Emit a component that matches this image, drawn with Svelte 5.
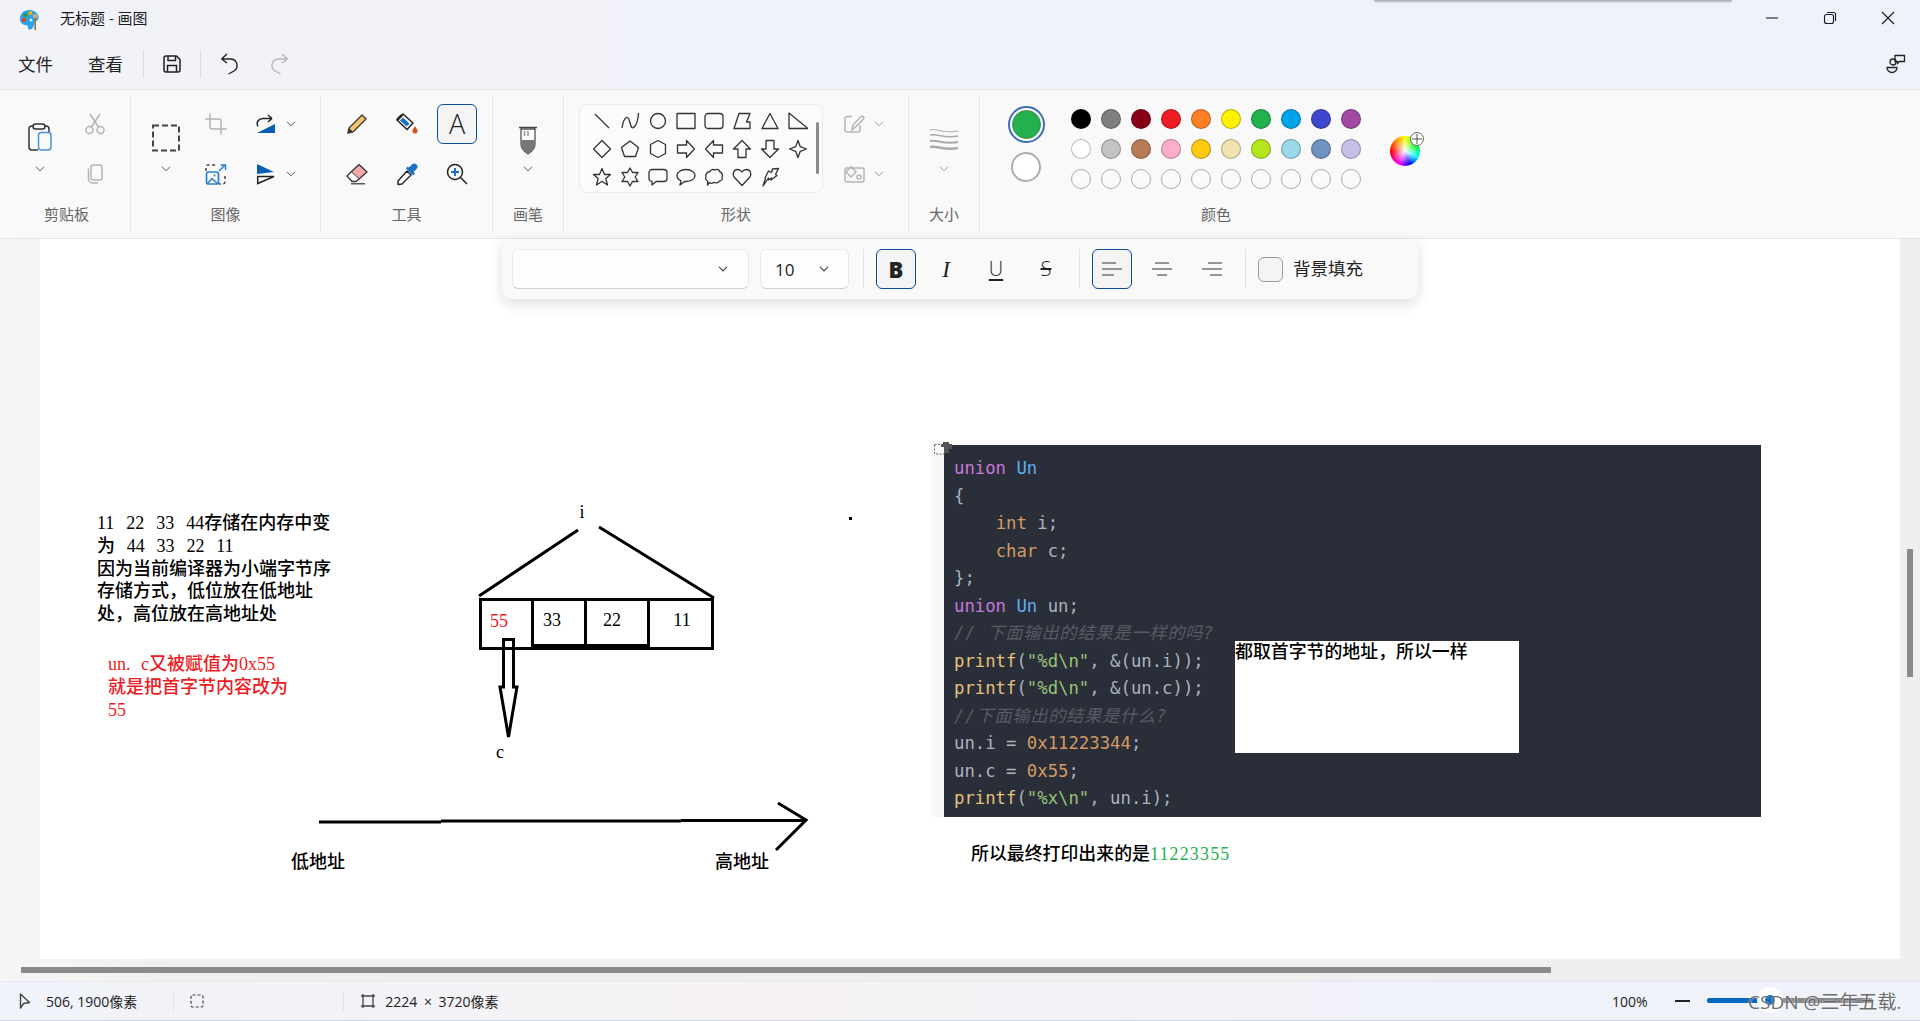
<script>
  const row1 = ['#000000','#7f7f7f','#880015','#ed1c24','#ff7f27','#fff200','#22b14c','#00a2e8','#3f48cc','#a349a4'];
  const row2 = ['#ffffff','#c3c3c3','#b97a57','#ffaec9','#ffc90e','#efe4b0','#b5e61d','#99d9ea','#7092be','#c8bfe7'];
  const row3 = Array(10).fill('');
  const shapes = [
    'M3 3L17 17',
    'M2 17C4 5 8 4 9.5 10S12 19 15 15 18 7 18.5 2',
    'M17.5 10a7.5 7.5 0 1 1-15 0a7.5 7.5 0 1 1 15 0Z',
    'M1 2.5H19V17.5H1Z',
    'M4 2.5H16a3 3 0 0 1 3 3V14.5a3 3 0 0 1-3 3H4a3 3 0 0 1-3-3V5.500a3 3 0 0 1 3-3Z',
    'M2 17.500L7 2.500H18L14.500 11H18V17.500Z',
    'M10 2.500L18 17.500H2Z',
    'M1 2V17.500H20Z',
    'M10 1.500L18.500 10L10 18.500L1.500 10Z',
    'M10 2L18.500 8.500L15.500 17.500H4.500L1.500 8.500Z',
    'M10 1.500L17.500 5.500V14.500L10 18.500L2.500 14.500V5.500Z',
    'M1.500 6H10.500V1.500L18.500 10L10.500 18.500V14H1.500Z',
    'M18.500 6H9.500V1.500L1.500 10L9.500 18.500V14H18.500Z',
    'M10 1.500L18.500 10H14V18.500H6V10H1.500Z',
    'M10 18.500L18.500 10H14V1.500H6V10H1.500Z',
    'M10 1.500L12.300 7.700L18.500 10L12.300 12.300L10 18.500L7.700 12.300L1.500 10L7.700 7.700Z',
    'M10 1.500L12.500 7.500H18.500L13.800 11.500L15.500 18L10 14.300L4.500 18L6.200 11.500L1.500 7.500H7.500Z',
    'M10 1L12.500 5.500H18L15.200 10L18 14.500H12.500L10 19L7.500 14.500H2L4.800 10L2 5.500H7.500Z',
    'M4 2.500H16a3 3 0 0 1 3 3V11.500a3 3 0 0 1-3 3H8L4 18V14.500a3 3 0 0 1-3-3V5.500a3 3 0 0 1 3-3Z',
    'M10 2.500C15 2.500 19 5 19 8.500S15 14.500 10 14.500H8.500L4 18L5 13.800C2.500 12.800 1 10.800 1 8.500C1 5 5 2.500 10 2.500Z',
    'M6 4.500C7 2.500 9.500 2 11 3C13 1.800 15.500 2.800 16 5C18 5.500 19 8 18 9.500C19 11.500 17.500 14 15.500 14C14.500 16 11.500 16.500 10 15.300C8.500 16.500 6.500 16.500 5.500 15.500L3.500 18L3.700 14C2 13.500 1 11 2 9.500C1 7.500 3.500 4.500 6 4.500Z',
    'M10 18.500L2.500 10.500C0 7.500 1.500 2.500 5.500 2.500C7.500 2.500 9 3.500 10 5C11 3.500 12.500 2.500 14.500 2.500C18.500 2.500 20 7.500 17.500 10.500Z',
    'M5 11L8.500 4L11.500 5.500L12.500 2L18.500 1.500L15.500 7.500L17 8.500L11 13L11.500 11L8.500 13L8.500 11L3 19L5.500 11.500Z'
  ];
  const code = [
    [['kw','union'],['','\u0020'],['ty','Un']],
    [['pl','{']],
    [['','    '],['nm','int'],['pl',' i;']],
    [['','    '],['nm','char'],['pl',' c;']],
    [['pl','};']],
    [['kw','union'],['','\u0020'],['ty','Un'],['pl',' un;']],
    [['cm','// 下面输出的结果是一样的吗?']],
    [['fn','printf'],['pl','('],['st','"%d\\n"'],['pl',', &(un.i));']],
    [['fn','printf'],['pl','('],['st','"%d\\n"'],['pl',', &(un.c));']],
    [['cm','//下面输出的结果是什么?']],
    [['pl','un.i = '],['nm','0x11223344'],['pl',';']],
    [['pl','un.c = '],['nm','0x55'],['pl',';']],
    [['fn','printf'],['pl','('],['st','"%x\\n"'],['pl',', un.i);']]
  ];
</script>

{#snippet chev(muted = false)}
  <svg class="chev" class:muted width="10" height="6" viewBox="0 0 10 6"><path d="M1 .8L5 4.800L9 .8"/></svg>
{/snippet}

{#snippet lines(a, b, c)}
  <svg width="22" height="18" viewBox="0 0 22 18" class="lines">
    <path d={`M${a} 3H${a + 14}M1 9H21M${b} 15H${b + c}`}/>
  </svg>
{/snippet}

<div class="app">
  <header class="title">
    <svg class="logo" width="24" height="24" viewBox="0 0 24 24">
      <path fill="#27a3ea" d="M11 2C5.500 2 2 6 2 11c0 4 3 6 6 6 1.500 0 2 1 2 2.500 0 1.500 1 2.500 2.500 2 2-.5 3.500-3 3.500-6 0-1 .5-2 2-2.500C20 12 21 10.500 20.500 8 19.500 4.500 15.500 2 11 2Z"/>
      <circle cx="7.500" cy="7" r="2.200" fill="#3a9a2a"/>
      <circle cx="12.500" cy="5" r="2" fill="#f5b40b"/>
      <circle cx="6" cy="12" r="2.200" fill="#d9482b"/>
      <circle cx="13" cy="12" r="1.500" fill="#eaf6fd"/>
      <rect x="16.400" y="8" width="1.600" height="14" fill="#9a6b3f"/>
      <rect x="15" y="6" width="4.500" height="4" rx="1" fill="#d8a870"/>
    </svg>
    <span class="title-text">无标题 - 画图</span>
    <div class="shadow-strip"></div>
    <div class="win">
      <button class="win-btn" aria-label="min"><svg width="14" height="14" viewBox="0 0 14 14"><path d="M1 7H13"/></svg></button>
      <button class="win-btn" aria-label="max"><svg width="14" height="14" viewBox="0 0 14 14"><rect x="1.500" y="3.500" width="9" height="9" rx="2"/><path d="M4 1.500H10.500a2 2 0 0 1 2 2V10"/></svg></button>
      <button class="win-btn" aria-label="close"><svg width="14" height="14" viewBox="0 0 14 14"><path d="M1 1L13 13M13 1L1 13"/></svg></button>
    </div>
  </header>

  <nav class="menu">
    <span class="mi first">文件</span>
    <span class="mi second">查看</span>
    <i class="msep a"></i>
    <svg class="m-save" width="18" height="18" viewBox="0 0 18 18"><path d="M3 1H13.500L17 4.500V15a2 2 0 0 1-2 2H3a2 2 0 0 1-2-2V3a2 2 0 0 1 2-2Z"/><path d="M5 1V5.500H12.500V1M4.500 17V10.500H13.500V17"/></svg>
    <i class="msep b"></i>
    <svg class="m-undo" width="20" height="22" viewBox="0 0 20 22"><path d="M1.500 6L7 1M1.500 6L7 10M1.500 6H11a6.500 6.500 0 0 1 3 12L8.500 21"/></svg>
    <svg class="m-redo" width="20" height="22" viewBox="0 0 20 22"><path d="M18.500 6L13 1M18.500 6L13 10M18.500 6H9a6.500 6.500 0 0 0-3 12L11.500 21"/></svg>
    <svg class="m-person" width="20" height="20" viewBox="0 0 20 20"><circle cx="7" cy="8" r="3"/><path d="M1 13.500H11a0 0 0 0 1 0 0a5 5 0 0 1-5 5a5 5 0 0 1-5-5Z"/><path d="M9 1.500H18.500V7.500H13.500L11.500 9.500V7.500H9Z"/></svg>
  </nav>

  <section class="ribbon">
    <div class="group g-clip">
      <div class="body cols-clip">
        <div class="big">
          <svg class="bigicon" width="26" height="30" viewBox="0 0 26 30">
            <path class="dk" d="M11 27H5a3 3 0 0 1-3-3V6a3 3 0 0 1 3-3h1M18 3h1a3 3 0 0 1 3 3v3"/>
            <rect class="dk" x="6" y="1" width="12" height="5" rx="2.500"/>
            <rect x="11.500" y="9.500" width="12.500" height="17.500" rx="3" fill="#f9f9f9" stroke="#4a90d9" stroke-width="1.500"/>
          </svg>
          {@render chev()}
        </div>
        <div class="stack">
          <div class="cell"><svg width="20" height="24" viewBox="0 0 20 24" class="off"><circle cx="4.500" cy="18" r="3.500"/><circle cx="15.500" cy="18" r="3.500"/><path d="M6.500 15L15 2M13.500 15L5 2"/></svg></div>
          <div class="cell"><svg width="20" height="22" viewBox="0 0 20 22" class="off"><rect x="6" y="2" width="11" height="15" rx="2"/><path d="M3.500 5.500V16a4 4 0 0 0 4 4H13"/></svg></div>
        </div>
      </div>
      <div class="label lbl-clip">剪贴板</div>
    </div>

    <div class="group g-image">
      <div class="body cols-image">
        <div class="big">
          <svg class="bigicon" width="30" height="28" viewBox="0 0 30 28"><rect x="2" y="1.500" width="26" height="25" fill="none" stroke="#444" stroke-width="2" stroke-dasharray="6 3"/></svg>
          {@render chev()}
        </div>
        <div class="stack">
          <div class="cell"><svg width="24" height="24" viewBox="0 0 24 24" class="off"><path d="M6 1.500V15a2 2 0 0 0 2 2H23M1 7H15a2 2 0 0 1 2 2V22.500"/></svg></div>
          <div class="cell"><svg width="22" height="22" viewBox="0 0 22 22"><path fill="none" stroke="#444" stroke-width="1.500" stroke-dasharray="3 2.500" d="M1 8V4a2 2 0 0 1 2-2H11M20 13V19a2 2 0 0 1-2 2H14"/><rect x="1.500" y="9" width="12" height="12" rx="2" fill="#f9f9f9" stroke="#2a7fd0" stroke-width="1.700"/><circle cx="9.500" cy="12.500" r="1" fill="#2a7fd0"/><path d="M3 20L7 15.500L12 20" fill="none" stroke="#2a7fd0" stroke-width="1.500"/><path d="M14 8L20 2M15.500 2H20.500V7" fill="none" stroke="#2a7fd0" stroke-width="1.500"/></svg></div>
        </div>
        <div class="stack">
          <div class="cell left">
            <svg width="24" height="24" viewBox="0 0 24 24"><path d="M3 21L21 12V21Z" fill="#0a5fb4"/><path d="M4 14.500C1.500 10 5 6.500 9 6.500H18M18 6.500L14 3M18 6.500L14 10" fill="none" stroke="#222" stroke-width="1.500"/></svg>
            {@render chev()}
          </div>
          <div class="cell left">
            <svg width="24" height="24" viewBox="0 0 24 24"><path d="M3 2L20 10L3 12Z" fill="#0a5fb4"/><path d="M3.700 14.500H20L3.700 21.500Z" fill="none" stroke="#222" stroke-width="1.500"/></svg>
            {@render chev()}
          </div>
        </div>
      </div>
      <div class="label">图像</div>
    </div>

    <div class="group g-tools">
      <div class="body cols-tools">
        <div class="cell"><svg width="24" height="24" viewBox="0 0 24 24"><path d="M17 3L21 7L8 20L2.800 21.200L4 16Z" fill="#f3c56f" stroke="#333" stroke-width="1.200" stroke-linejoin="round"/><path d="M2.800 21.200L4 16L8 20Z" fill="#333"/></svg></div>
        <div class="cell"><svg width="24" height="24" viewBox="0 0 24 24"><path d="M8 2L18 11L12 17.500L2 8Z" fill="#fff" stroke="#222" stroke-width="1.500" stroke-linejoin="round"/><path d="M8 5.500L14.500 11.500L11.500 14.500L5 8.500Z" fill="#1a72c9"/><path d="M2 8L7 3" stroke="#222" stroke-width="2.500"/><path d="M20 14C21 16 22.500 17.500 22.500 19a2.500 2.500 0 0 1-5 0c0-1.500 1.500-3 2.500-5Z" fill="#d4501c"/></svg></div>
        <div class="cell"><button class="tool-on">A</button></div>
        <div class="cell"><svg width="24" height="24" viewBox="0 0 24 24"><path d="M14 2.500L22 10L14 17L6 10Z" fill="#f4a9a9" stroke="#333" stroke-width="1.300" stroke-linejoin="round"/><path d="M6 10L2 14L7 19.500H11L14 17" fill="#fff" stroke="#333" stroke-width="1.300" stroke-linejoin="round"/><path d="M6 21.800H20" stroke="#333" stroke-width="1.200"/></svg></div>
        <div class="cell"><svg width="24" height="24" viewBox="0 0 24 24"><path d="M12 9L16 13L7 22L3 22.500L3 19Z" fill="#fff" stroke="#222" stroke-width="1.400" stroke-linejoin="round"/><path d="M11 6.500L18 13.500L20 11.500L18.500 10L21.500 7a3 3 0 0 0-4.500-4.500L14 5.500L12.500 4.500Z" fill="#1a72c9"/></svg></div>
        <div class="cell"><svg width="24" height="24" viewBox="0 0 24 24"><circle cx="10" cy="10" r="7.500" fill="none" stroke="#222" stroke-width="1.500"/><path d="M15.500 15.500L22 22" stroke="#222" stroke-width="1.600"/><path d="M6 10H14M10 6V14" stroke="#1a72c9" stroke-width="2"/></svg></div>
      </div>
      <div class="label">工具</div>
    </div>

    <div class="group g-brush">
      <div class="body center-big">
        <div class="big nudge2">
          <svg class="bigicon" width="20" height="30" viewBox="0 0 20 30"><path d="M1 2.500H19M3.500 2.500V4M16.500 2.500V4" stroke="#444" stroke-width="1.500" fill="none"/><path d="M3 4H17V19C17 23 13 27 10 29C7 27 3 23 3 19Z" fill="#fafafa" stroke="#555" stroke-width="1.300"/><path d="M3 15H17V19C17 23 13 27 10 29C7 27 3 23 3 19Z" fill="#777"/><path d="M6.500 6V11M10 6V11" stroke="#999" stroke-width="1.500"/></svg>
          {@render chev()}
        </div>
      </div>
      <div class="label">画笔</div>
    </div>

    <div class="group g-shapes">
      <div class="body shapes-row">
        <div class="shape-panel">
          <div class="shape-grid">
            {#each shapes as d}
              <svg width="20" height="20" viewBox="0 0 20 20"><path {d}/></svg>
            {/each}
          </div>
          <i class="panel-thumb"></i>
        </div>
        <div class="stack outline-col">
          <div class="cell left">
            <svg width="22" height="20" viewBox="0 0 22 20" class="off"><path d="M9 2.500H4a2 2 0 0 0-2 2V16a2 2 0 0 0 2 2H15a2 2 0 0 0 2-2V11"/><path d="M9 16L10 11L18 2.500C20 1.500 21.500 3 20.500 5L12 13.500Z"/></svg>
            {@render chev(true)}
          </div>
          <div class="cell left">
            <svg width="22" height="20" viewBox="0 0 22 20" class="off"><rect x="2" y="4" width="19" height="14" rx="2"/><path d="M3 8L8 2.500L13 8L8 13Z"/><circle cx="16" cy="13" r="2"/></svg>
            {@render chev(true)}
          </div>
        </div>
      </div>
      <div class="label">形状</div>
    </div>

    <div class="group g-size">
      <div class="body center-big">
        <div class="big nudge3">
          <svg class="bigicon" width="30" height="28" viewBox="0 0 30 28" fill="none" stroke="#aaa"><path d="M1 3C8 1 14 7 29 4" stroke-width="1"/><path d="M1 8C8 6 14 12 29 9" stroke-width="1.500"/><path d="M1 14C8 12 14 18 29 15" stroke-width="2"/><path d="M1 20C8 18 14 24 29 21" stroke-width="2.500"/></svg>
          {@render chev(true)}
        </div>
      </div>
      <div class="label">大小</div>
    </div>

    <div class="group g-colors">
      <div class="body colors-row">
        <div class="current">
          <div class="fg"><i></i></div>
          <div class="bg"></div>
        </div>
        <div class="palette">
          {#each row1 as c}<i class="sw" style="background:{c}"></i>{/each}
          {#each row2 as c}<i class="sw" style="background:{c}"></i>{/each}
          {#each row3 as _}<i class="sw empty"></i>{/each}
        </div>
        <div class="wheel">
          <span class="plus"><svg width="10" height="10" viewBox="0 0 10 10"><path d="M0 5H10M5 0V10"/></svg></span>
        </div>
      </div>
      <div class="label">颜色</div>
    </div>
  </section>

  <main class="work">
    <div class="canvas">
      <svg class="draw" width="1860" height="720" viewBox="40 239 1860 720">
        <g class="ink">
          <path d="M479 596L578 530M599 527L714 598"/>
          <rect x="480.500" y="599.500" width="232" height="49"/>
          <path d="M532.500 599V648M585.500 599V648M648.500 599V648"/>
          <path d="M532 645.500H648"/>
          <path class="arrow" d="M503.500 687V639.500H513.500V687H517L508.500 737L500 687Z"/>
          <path d="M319 822H441M441 821H681M681 820.500H806M778 803L806 820L776 850"/>
        </g>
        <rect x="849" y="517" width="3" height="3" fill="#000"/>
        <text class="t red" x="499" y="627" text-anchor="middle">55</text>
        <text class="t" x="552" y="626" text-anchor="middle">33</text>
        <text class="t" x="612" y="626" text-anchor="middle">22</text>
        <text class="t" x="682" y="626" text-anchor="middle">11</text>
        <text class="t" x="582" y="518" text-anchor="middle">i</text>
        <text class="t" x="500" y="758" text-anchor="middle">c</text>
        <text class="t" x="318" y="868" text-anchor="middle">低地址</text>
        <text class="t" x="742" y="868" text-anchor="middle">高地址</text>
      </svg>

      <div class="note black">
        <div class="tight">11   22   33   44存储在内存中变</div>
        <div class="wide">为  44  33  22  11</div>
        <div>因为当前编译器为小端字节序</div>
        <div>存储方式，低位放在低地址</div>
        <div>处，高位放在高地址处</div>
      </div>
      <div class="note redtext">
        <div class="unc">un. c又被赋值为0x55</div>
        <div>就是把首字节内容改为</div>
        <div>55</div>
      </div>

      <div class="shot">
        <svg class="shot-mark" width="18" height="14" viewBox="0 0 18 14"><rect x=".5" y="3.500" width="11" height="9.500" fill="none" stroke="#666" stroke-dasharray="2 1.500"/><path d="M9 1H15V3H18V8H15V12H10V6H7V3H9Z" fill="#555"/></svg>
        <div class="code">
          {#each code as line}
            <div class="cl">{#each line as [k, t]}<span class={k}>{t}</span>{/each}</div>
          {/each}
        </div>
      </div>

      <div class="whitebox">都取首字节的地址，所以一样</div>
      <div class="conclusion">所以最终打印出来的是<span>11223355</span></div>
    </div>
    <i class="hbar"></i>
    <i class="vbar"></i>

    <div class="fmtbar">
      <div class="sel font">{@render chev()}</div>
      <div class="sel size"><span>10</span>{@render chev()}</div>
      <i class="fsep first"></i>
      <button class="fbtn on b">B</button>
      <button class="fbtn it">I</button>
      <button class="fbtn un">U</button>
      <button class="fbtn st"> S </button>
      <i class="fsep"></i>
      <button class="fbtn on" aria-label="left">{@render lines(1, 1, 12)}</button>
      <button class="fbtn" aria-label="center">{@render lines(4, 6, 10)}</button>
      <button class="fbtn" aria-label="right">{@render lines(7, 9, 12)}</button>
      <i class="fsep"></i>
      <i class="check"></i>
      <span class="fill-label">背景填充</span>
    </div>
  </main>

  <footer class="status">
    <svg class="st-cur" width="12" height="16" viewBox="0 0 12 16"><path d="M1.500 1V15L4.500 10.500L10.500 9.500Z" fill="none" stroke="#444" stroke-width="1.400" stroke-linejoin="round"/></svg>
    <span class="st-pos">506, 1900像素</span>
    <i class="ssep s1"></i>
    <svg class="st-sel" width="14" height="14" viewBox="0 0 14 14"><rect x="1" y="1" width="12" height="12" rx="1.500" fill="none" stroke="#444" stroke-width="1.200" stroke-dasharray="3 2"/></svg>
    <i class="ssep s2"></i>
    <svg class="st-frame" width="16" height="16" viewBox="0 0 16 16"><path d="M3 1V15M13 1V15M1 3H15M1 13H15" fill="none" stroke="#444" stroke-width="1.300"/></svg>
    <span class="st-size">2224 × 3720像素</span>
    <span class="st-zoom">100%</span>
    <i class="minus"></i>
    <div class="slider"><i class="fillbar"></i><i class="thumb"></i></div>
    <span class="mark">CSDN @三年五载.</span>
  </footer>
</div>

<style>
  :global(body) { margin: 0; background: #f0f0f0; }
  .app {
    width: 1920px; height: 1021px; display: flex; flex-direction: column; overflow: hidden;
    font-family: "Open Sans", "Noto Sans CJK SC", sans-serif; color: #222; position: relative;
  }
  i { display: block; font-style: normal; }
  button { font: inherit; color: inherit; border: 0; background: none; padding: 0; margin: 0; }
  svg { display: block; flex: none; }

  .title, .menu { background: linear-gradient(90deg, #f2f3f8, #f0f2fa 60%, #eff2fb); }
  .title { height: 44px; display: flex; align-items: center; position: relative; }
  .logo { margin-left: 18px; margin-top: -5px; }
  .title-text { margin-left: 18px; font-size: 15px; line-height: 20px; margin-top: -9px; color: #1d1d1d; }
  .shadow-strip { position: absolute; left: 1374px; width: 358px; top: 0; height: 3px; background: linear-gradient(#a8abaf, #dfe1e6); border-radius: 0 0 3px 3px; }
  .win { margin-left: auto; display: flex; padding-right: 3px; margin-top: -8px; }
  .win-btn { width: 58px; height: 30px; display: flex; align-items: center; justify-content: center; }
  .win-btn path, .win-btn rect { fill: none; stroke: #1a1a1a; stroke-width: 1.100; }

  .menu { height: 45px; box-sizing: border-box; padding-bottom: 6px; display: flex; align-items: center; position: relative; }
  .mi { font-size: 17.500px; line-height: 24px; color: #222; }
  .mi.first { margin-left: 18px; }
  .mi.second { margin-left: 35px; }
  .msep { width: 1px; height: 28px; background: #dcdde2; }
  .msep.a { margin-left: 20px; }
  .m-save { margin-left: 19px; }
  .m-save path { fill: none; stroke: #222; stroke-width: 1.500; }
  .msep.b { margin-left: 19px; }
  .m-undo { margin-left: 19px; }
  .m-undo path { fill: none; stroke: #222; stroke-width: 1.400; }
  .m-redo { margin-left: 29px; }
  .m-redo path { fill: none; stroke: #b5b5b5; stroke-width: 1.400; }
  .m-person { margin-left: auto; margin-right: 14px; }
  .m-person path, .m-person circle { fill: none; stroke: #222; stroke-width: 1.300; }

  .ribbon {
    height: 150px; box-sizing: border-box; background: #f9f9f9;
    border-top: 1px solid #e6e6e8; border-bottom: 1px solid #e4e4e4;
    display: flex; align-items: flex-start; padding-top: 5px;
  }
  .group { height: 138px; box-sizing: border-box; border-right: 1px solid #e5e5e5; display: flex; flex-direction: column; }
  .g-clip { width: 131px; }
  .g-image { width: 190px; }
  .g-tools { width: 172px; }
  .g-brush { width: 71px; }
  .g-shapes { width: 345px; }
  .g-size { width: 71px; }
  .g-colors { width: 472px; border-right: 0; }
  .body { height: 109px; box-sizing: border-box; padding-top: 4px; display: flex; }
  .label { height: 29px; box-sizing: border-box; text-align: center; font-size: 15px; line-height: 20px; color: #666; }
  .lbl-clip { padding-left: 3px; }

  .cell { width: 50px; height: 50px; display: flex; align-items: center; justify-content: center; }
  .cell.left { width: auto; justify-content: flex-start; padding-left: 13px; gap: 8px; }
  .stack { display: flex; flex-direction: column; }
  .big { width: 50px; display: flex; flex-direction: column; align-items: center; }
  .bigicon { margin-top: 24px; height: 30px; }
  .big .chev { position: relative; top: 13px; }
  .nudge2 .bigicon { margin-top: 26px; }
  .nudge2 .chev { top: 11px; }
  .nudge3 .bigicon { margin-top: 27px; }
  .nudge3 .chev { top: 10px; }
  .chev path { fill: none; stroke: #555; stroke-width: 1; }
  .chev.muted path { stroke: #999; }
  .off path, .off rect, .off circle { fill: none; stroke: #b4b4b4; stroke-width: 1.500; }
  .dk { fill: none; stroke: #333; stroke-width: 1.500; }

  .cols-clip { padding-left: 15px; gap: 5px; }
  .cols-image { padding-left: 10px; }
  .cols-tools { padding-left: 11px; width: 161px; flex-wrap: wrap; align-content: flex-start; }
  .center-big { justify-content: center; }
  .tool-on {
    width: 40px; height: 40px; box-sizing: border-box; border: 1px solid #0a4d9c; border-radius: 6px; background: #f4f4f4;
    font-family: "Open Sans", sans-serif; font-weight: 300; font-size: 27px; line-height: 36px; color: #222;
  }

  .shapes-row { padding-top: 0; }
  .shape-panel {
    margin-left: 15px; margin-top: 9px; width: 244px; height: 89px; box-sizing: border-box; border: 1px solid #ececec; border-radius: 8px;
    position: relative; padding: 2px 0 0 12px; background: #fbfbfb;
  }
  .shape-grid { display: grid; grid-template-columns: repeat(8, 28px); grid-auto-rows: 28px; align-items: center; justify-items: start; }
  .shape-grid path { fill: none; stroke: #333; stroke-width: 1.300; stroke-linejoin: round; }
  .panel-thumb { position: absolute; left: 236px; top: 17px; width: 3px; height: 52px; background: #8b8b8b; border-radius: 2px; }
  .outline-col { margin-left: 6px; padding-top: 4px; }
  .outline-col .cell.left { padding-left: 14px; gap: 9px; }

  .colors-row { padding-top: 0; position: relative; }
  .current { width: 38px; margin-left: 27px; padding-top: 11px; display: flex; flex-direction: column; align-items: center; gap: 9px; }
  .fg { width: 37px; height: 37px; box-sizing: border-box; border: 2px solid #3a6fb5; border-radius: 50%; display: flex; align-items: center; justify-content: center; background: #fff; }
  .fg i { width: 29px; height: 29px; box-sizing: border-box; border-radius: 50%; background: #22b14c; border: 1px solid #3f8a55; }
  .bg { width: 30px; height: 30px; box-sizing: border-box; background: #fff; border: 2px solid #adadad; border-radius: 50%; }
  .palette { margin-left: 26px; padding-top: 14px; display: grid; grid-template-columns: repeat(10, 20px); grid-auto-rows: 20px; gap: 10px; align-content: start; }
  .sw { width: 20px; height: 20px; box-sizing: border-box; border-radius: 50%; border: 1px solid rgba(0,0,0,.28); }
  .sw.empty { background: #fafafa; border: 1.500px solid #ababab; }
  .wheel {
    margin-left: 29px; margin-top: 41px; width: 30px; height: 30px; border-radius: 50%; position: relative;
    background: radial-gradient(closest-side, #fff 0%, rgba(255,255,255,0) 90%), conic-gradient(#ff0, #0f0 60deg, #0ff 115deg, #00f 160deg, #f0f 205deg, #f00 270deg, #ff0 360deg);
  }
  .plus { position: absolute; right: -4px; top: -4px; width: 14px; height: 14px; box-sizing: border-box; background: #fff; border: 1px solid #666; border-radius: 50%; display: flex; align-items: center; justify-content: center; }
  .plus path { stroke: #555; stroke-width: 1; }

  .work { flex: 1; position: relative; background: linear-gradient(90deg, #f6f6f6, #efefef 10%); }
  .canvas { margin-left: 40px; width: 1860px; height: 720px; background: #fff; position: relative; font-family: "Liberation Serif", "Noto Sans CJK SC", serif; color: #000; overflow: hidden; }
  .draw { position: absolute; left: 0; top: 0; }
  .ink path, .ink rect { fill: none; stroke: #000; stroke-width: 3; }
  .t { font-size: 18px; font-family: "Liberation Serif", "Noto Sans CJK SC", serif; font-weight: 500; fill: #000; }
  .t.red { fill: #ed1c24; }
  .note { position: absolute; font-size: 18px; font-weight: 500; }
  .note div { height: 22.800px; line-height: 22.800px; white-space: pre; }
  .note .tight { word-spacing: -.5px; }
  .note .wide { word-spacing: 1.400px; }
  .note .unc { word-spacing: 6px; }
  .black { left: 57px; top: 273px; }
  .redtext { left: 68px; top: 414px; color: #ed1c24; }

  .shot { position: absolute; left: 891px; top: 202px; width: 830px; background: #f8f8f8; padding: 4px 0 0 13px; box-sizing: border-box; height: 376px; }
  .shot-mark { position: absolute; left: 3px; top: 0; }
  .code { background: #2a2e38; height: 372px; box-sizing: border-box; padding: 10px 0 0 10px; font-family: "DejaVu Sans Mono", "Noto Sans CJK SC", monospace; font-size: 17.300px; white-space: pre; color: #abb2bf; }
  .cl { height: 27.500px; line-height: 27.500px; }
  .kw { color: #c678dd; }
  .ty { color: #61aeee; }
  .nm { color: #d19a66; }
  .pl { color: #abb2bf; }
  .fn { color: #e6c07b; }
  .st { color: #98c379; }
  .cm { color: #565b66; font-style: italic; letter-spacing: .7px; }

  .whitebox { position: absolute; left: 1195px; top: 402px; width: 284px; height: 112px; background: #fff; font-size: 17.900px; font-weight: 500; line-height: 22px; white-space: pre; }
  .conclusion { position: absolute; left: 931px; top: 604px; font-size: 17.900px; font-weight: 500; line-height: 22px; white-space: pre; }
  .conclusion span { color: #22b14c; letter-spacing: 1.200px; }

  .hbar { position: absolute; left: 21px; top: 728px; width: 1530px; height: 6px; background: #8a8a8a; }
  .vbar { position: absolute; left: 1907px; top: 310px; width: 6px; height: 128px; background: #8a8a8a; }

  .fmtbar {
    position: absolute; left: 502px; top: 0; width: 916px; height: 60px; box-sizing: border-box; background: #f9f9f9;
    border-radius: 2px 2px 10px 10px; box-shadow: 0 5px 14px rgba(0,0,0,.13); padding: 0 0 0 10px;
    display: flex; align-items: center; gap: 10px;
  }
  .sel { height: 40px; box-sizing: border-box; background: #fdfdfd; border: 1px solid #e8e8e8; border-bottom-color: #cfcfcf; border-radius: 6px; display: flex; align-items: center; justify-content: flex-end; }
  .sel.font { width: 237px; padding-right: 20px; }
  .sel.size { width: 89px; margin-left: 1px; padding-right: 19px; justify-content: space-between; padding-left: 14px; font-size: 17px; color: #222; }
  .sel .chev path { stroke: #444; stroke-width: 1.200; }
  .fsep { width: 1px; height: 40px; background: #e2e2e2; margin: 0 2px 0 3px; }
  .fsep.first { margin-left: 4px; }
  .fbtn { width: 40px; height: 40px; box-sizing: border-box; display: flex; align-items: center; justify-content: center; border-radius: 6px; font-size: 20px; color: #222; font-family: "Open Sans", sans-serif; line-height: 1; white-space: pre; }
  .fbtn.on { border: 1px solid #0a4d9c; background: #f4f4f4; }
  .fbtn.b { font-weight: 800; font-size: 22px; }
  .fbtn.it { font-family: "Liberation Serif", serif; font-style: italic; font-size: 23px; }
  .fbtn.un { text-decoration: underline; text-underline-offset: 3px; font-weight: 300; }
  .fbtn.st { text-decoration: line-through; font-weight: 300; }
  .lines path { fill: none; stroke: #333; stroke-width: 1.200; }
  .check { width: 25px; height: 25px; box-sizing: border-box; border: 1.500px solid #9b9b9b; border-radius: 6px; background: #f4f4f4; }
  .fill-label { font-size: 17.500px; line-height: 24px; color: #222; margin-top: -3px; }

  .status { height: 40px; box-sizing: border-box; display: flex; align-items: center; position: relative; font-size: 14px; border-bottom: 1px solid #cfd6e2; border-top: 1px solid #e9e9ee; background: linear-gradient(90deg, #f0f3fa, #f6f2f3 40%, #f0f2fa 75%); }
  .st-cur { margin-left: 19px; }
  .st-pos { margin-left: 15px; }
  .ssep { width: 1px; height: 20px; background: #dfe1e6; }
  .ssep.s1 { margin-left: 36px; }
  .st-sel { margin-left: 16px; }
  .ssep.s2 { margin-left: 139px; }
  .st-frame { margin-left: 16px; }
  .st-size { margin-left: 9px; word-spacing: 3px; }
  .st-zoom { position: absolute; left: 1612px; }
  .minus { position: absolute; left: 1675px; width: 15px; height: 1.500px; background: #222; }
  .slider { position: absolute; left: 1707px; width: 166px; height: 5px; background: #868686; border-radius: 3px; top: 16px; }
  .fillbar { position: absolute; left: 0; top: 0; width: 63px; height: 5px; background: #0067c0; border-radius: 3px; }
  .thumb { position: absolute; left: 50px; top: -11px; width: 26px; height: 26px; box-sizing: border-box; border-radius: 50%; background: #0067c0; border: 8px solid #fff; }
  .mark { position: absolute; left: 1748px; font-size: 19px; color: rgba(70,70,70,.8); text-shadow: 0 0 2px #fff; font-family: "Open Sans", "Noto Sans CJK SC", sans-serif; white-space: nowrap; }
</style>
